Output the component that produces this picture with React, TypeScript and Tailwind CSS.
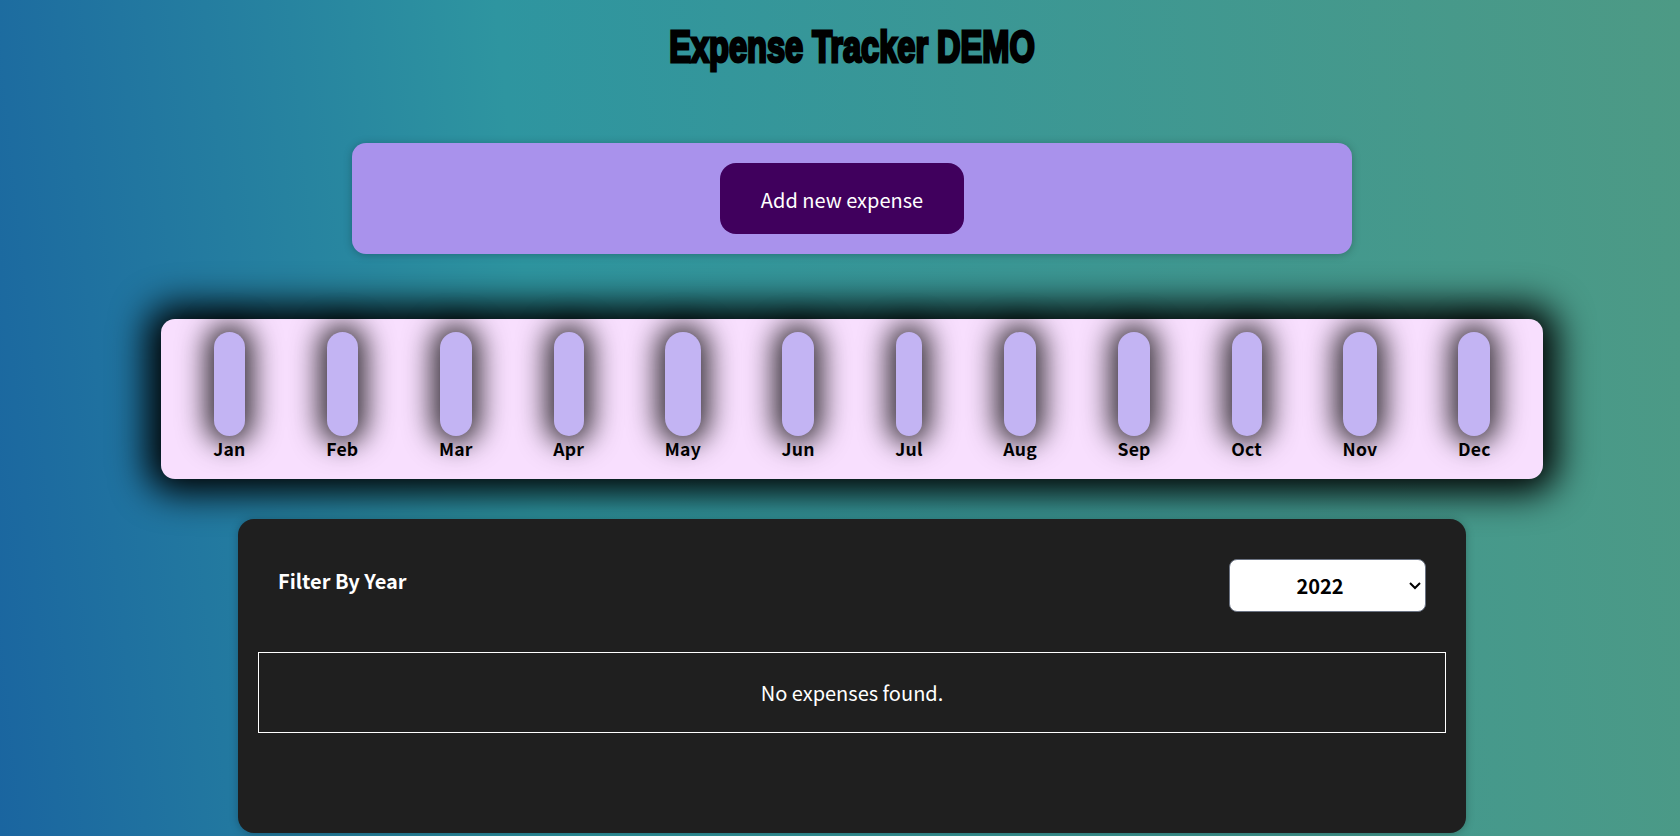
import React from "react";

const MONTHS = [
  { label: "Jan", w: 31 },
  { label: "Feb", w: 31 },
  { label: "Mar", w: 32 },
  { label: "Apr", w: 30 },
  { label: "May", w: 36 },
  { label: "Jun", w: 32 },
  { label: "Jul", w: 26 },
  { label: "Aug", w: 32 },
  { label: "Sep", w: 32 },
  { label: "Oct", w: 30 },
  { label: "Nov", w: 34 },
  { label: "Dec", w: 32 },
];

export default function App() {
  return (
    <div className="h-[836px] overflow-hidden bg-[linear-gradient(84deg,#1a65a0_0%,#2e95a0_33%,#4d9a85_100%)] pl-6 font-['Noto_Sans_CJK_SC','Noto_Sans',sans-serif]">
      <h1 className="flex h-[93px] items-start justify-center pt-6 font-['Liberation_Sans',sans-serif] text-[44px] leading-[46px] font-bold text-black">
        <span className="inline-block scale-x-[0.74] whitespace-nowrap [-webkit-text-stroke:3px_black]">
          Expense Tracker DEMO
        </span>
      </h1>

      <div className="mx-auto mt-[50px] flex h-[111px] w-[1000px] items-start justify-center rounded-[14px] bg-[#a992ec] pt-5 pr-5 shadow-[0_1px_8px_rgba(0,0,0,0.25)]">
        <button className="h-[71px] w-[244px] rounded-2xl bg-[#40005d] pt-[2px] text-[20px] leading-[30px] text-white">
          Add new expense
        </button>
      </div>

      <div className="mx-auto mt-[65px] flex h-[160px] w-[1382px] items-start justify-around rounded-[14px] bg-[#f8dffe] px-3 pt-[13px] shadow-[0_0_36px_14px_rgba(0,0,0,1)]">
        {MONTHS.map(m => (
          <div key={m.label} className="flex flex-col items-center">
            <div
              className="h-[104px] rounded-[18px] bg-[#c3b4f3] shadow-[0_0_28px_8px_rgba(0,0,0,0.8)]"
              style={{ width: m.w }}
            />
            <span className="text-[17.6px] leading-[25px] font-semibold tracking-[0.2px] text-black">{m.label}</span>
          </div>
        ))}
      </div>

      <div className="mx-auto mt-10 h-[314px] w-[1228px] rounded-2xl bg-[#1f1f1f] px-5 pt-10 shadow-[0_1px_8px_rgba(0,0,0,0.25)]">
        <div className="flex items-start justify-between pr-5 pl-5">
          <span className="pt-[4px] text-[20px] leading-[36px] font-semibold text-white">Filter By Year</span>
          <select className="h-[42.4px] w-[157.6px] rounded-[6.4px] border border-gray-500 bg-white text-center text-[16px] font-semibold text-black [zoom:1.25]">
            <option>2022</option>
          </select>
        </div>
        <div className="mt-10 flex h-[81px] items-center justify-center border border-white text-[20px] leading-[30px] text-white">
          No expenses found.
        </div>
      </div>
    </div>
  );
}
